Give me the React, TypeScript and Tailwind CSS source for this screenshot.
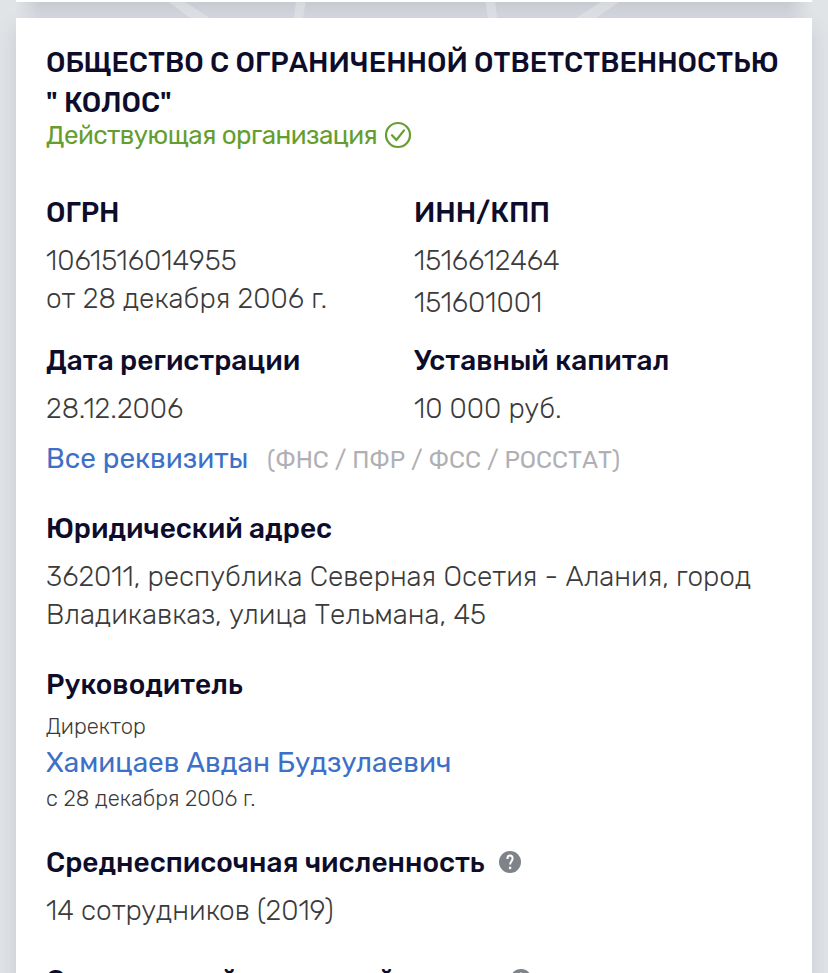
import React from 'react';

const heading = 'whitespace-nowrap text-[28px] leading-[38px] font-medium text-[#0d0d2b]';
const value = 'whitespace-nowrap text-[28px] leading-[38px] font-light text-[#3b3b3b]';
const link = 'whitespace-nowrap text-[28px] leading-[38px] font-normal text-[#3d70c8]';
const small = 'whitespace-nowrap text-[22px] leading-[36px] font-light text-[#3b3b3b]';

const CheckIcon = () => (
    <svg viewBox="0 0 28 28" className="h-7 w-7 shrink-0" fill="none" stroke="#669d2f" strokeWidth="2.2">
        <circle cx="14" cy="14" r="12" />
        <path d="M8 14.2l4.4 4.8L20 9.4" strokeLinecap="round" strokeLinejoin="round" />
    </svg>
);

const HelpIcon = () => (
    <svg viewBox="0 0 22 22" className="relative -top-px h-[22px] w-[22px] shrink-0" fill="none">
        <circle cx="11" cy="11" r="11" fill="#808289" />
        <path d="M8.4 8C8.4 5.8 9.4 4.6 11 4.6c1.6 0 2.6 1.2 2.6 3 0 2.6-2.5 3.1-2.5 6" stroke="#fff" strokeWidth="2" />
        <circle cx="11.1" cy="16.9" r="1.3" fill="#fff" />
    </svg>
);

const App = () => {
    return (
        <div className="relative h-[973px] overflow-hidden bg-[#e1e4e6] font-['Rubik','Roboto',sans-serif]">
            <div className="relative mx-4 h-[2px] bg-white" />
            <div className="absolute inset-x-4 top-0.5 h-4 bg-linear-to-b from-[#c7cad1] to-[#d6d9df] mask-x-from-97% mask-x-to-100%" />
            <svg className="absolute top-0.5 left-4 h-4 w-[796px]" viewBox="16 2 796 16" fill="#fff" fillOpacity="0.25">
                <path d="M166 0h16l28 18h-20zM296 0h10l-3 18h-9zM485 0h10l2 18h-9zM604 0h18l-26 18h-20z" />
            </svg>

            <main className="relative mx-4 mt-4 h-[1000px] bg-white pt-[25px] pl-[30px] shadow-[0_10px_18px_rgba(75,85,120,0.18)]">
                <h1 className="whitespace-nowrap text-[28px] leading-10 font-medium text-[#0d0d2b]">
                    <span className="block">ОБЩЕСТВО С ОГРАНИЧЕННОЙ ОТВЕТСТВЕННОСТЬЮ</span>
                    <span className="block">" КОЛОС"</span>
                </h1>
                <div className="-mt-[7px] flex h-[38px] items-center">
                    <span className="w-[338px] whitespace-nowrap text-[26px] tracking-[-0.53px] text-[#669d2f]">Действующая организация</span>
                    <CheckIcon />
                </div>

                <div className="mt-10 grid grid-cols-[368px_1fr]">
                    <section>
                        <h2 className={heading}>ОГРН</h2>
                        <p className={`mt-2.5 ${value}`}>1061516014955</p>
                        <p className={value}>от 28 декабря 2006 г.</p>
                    </section>
                    <section>
                        <h2 className={heading}>ИНН/КПП</h2>
                        <p className={`mt-2.5 ${value}`}>1516612464</p>
                        <p className={`mt-1 ${value}`}>151601001</p>
                    </section>
                </div>

                <div className="mt-5 grid grid-cols-[368px_1fr]">
                    <section>
                        <h2 className={heading}>Дата регистрации</h2>
                        <p className={`mt-2.5 ${value}`}>28.12.2006</p>
                    </section>
                    <section>
                        <h2 className={heading}>Уставный капитал</h2>
                        <p className={`mt-2.5 ${value}`}>10 000 руб.</p>
                    </section>
                </div>

                <div className="mt-3 flex items-baseline">
                    <a className={`w-[221px] ${link}`}>Все реквизиты</a>
                    <span className="whitespace-nowrap text-2xl font-normal text-[#b0b0b4]">(ФНС / ПФР / ФСС / РОССТАТ)</span>
                </div>

                <section className="mt-8">
                    <h2 className={heading}>Юридический адрес</h2>
                    <p className={`mt-2.5 ${value}`}>362011, республика Северная Осетия - Алания, город</p>
                    <p className={value}>Владикавказ, улица Тельмана, 45</p>
                </section>

                <section className="mt-8">
                    <h2 className={heading}>Руководитель</h2>
                    <p className={`mt-[5px] ${small}`}>Директор</p>
                    <a className={`-mt-px block ${link}`}>Хамицаев Авдан Будзулаевич</a>
                    <p className={`-mt-px ${small}`}>с 28 декабря 2006 г.</p>
                </section>

                <section className="mt-[27px]">
                    <div className="flex items-center">
                        <h2 className={`w-[453px] ${heading}`}>Среднесписочная численность</h2>
                        <HelpIcon />
                    </div>
                    <p className={`mt-2.5 ${value}`}>14 сотрудников (2019)</p>
                </section>

                <section className="mt-8 flex items-center">
                    <h2 className={`w-[464px] ${heading}`}>Специальный налоговый режим</h2>
                    <HelpIcon />
                </section>
            </main>
        </div>
    );
};

export default App;
